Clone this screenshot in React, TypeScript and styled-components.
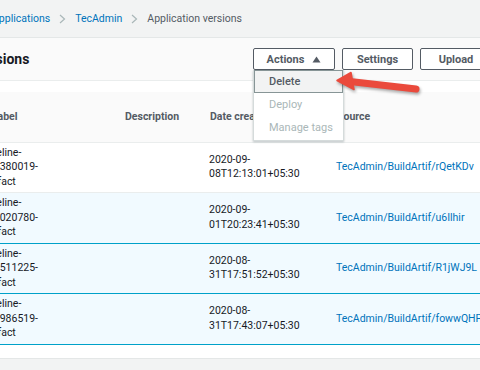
import React from "react";
import styled, { createGlobalStyle } from "styled-components";

const GlobalStyle = createGlobalStyle`
  html, body {
    margin: 0;
    padding: 0;
    background: #f2f3f3;
  }
  body {
    font-family: Roboto, "Liberation Sans", Arial, sans-serif;
    color: #16191f;
    overflow: hidden;
  }
`;

const Viewport = styled.div`
  position: relative;
  width: 480px;
  height: 370px;
  overflow: hidden;
  background: #f2f3f3;
`;

const Breadcrumbs = styled.nav`
  display: flex;
  align-items: center;
  gap: 9px;
  height: 37px;
  margin-left: -8px;
  border-bottom: 1px solid #e4e7e7;
  font-size: 10.5px;
`;

const Crumb = styled.span<{ $current?: boolean }>`
  color: ${p => (p.$current ? "#545b64" : "#0073bb")};
  white-space: nowrap;
`;

const Chevron = () => (
  <svg width="7" height="10" viewBox="0 0 7 10">
    <polyline points="1,1 5.5,5 1,9" fill="none" stroke="#aab7b8" strokeWidth="1.2" />
  </svg>
);

const Panel = styled.section`
  margin-left: -125px;
  width: 637px;
  background: #fff;
  border-bottom: 1px solid #e4e7e7;
  padding-bottom: 13px;
`;

const PanelHeader = styled.header`
  display: flex;
  align-items: center;
  justify-content: space-between;
  height: 42px;
  padding: 0 20px 0 26px;
  background: #fafafa;
  border-bottom: 1px solid #eaeded;
  margin-bottom: 11px;
`;

const Title = styled.h2`
  margin: 0;
  font-size: 14px;
  font-weight: 700;
  color: #16191f;
`;

const Toolbar = styled.div`
  display: flex;
  align-items: center;
  gap: 7px;
`;

const ButtonWrap = styled.div`
  position: relative;
`;

const Button = styled.button<{ $w: number }>`
  display: flex;
  align-items: center;
  justify-content: center;
  gap: 8px;
  width: ${p => p.$w}px;
  height: 22px;
  padding: 0;
  background: #fff;
  border: 1px solid #545b64;
  border-radius: 2px;
  font-family: inherit;
  font-size: 11px;
  font-weight: 700;
  color: #545b64;
`;

const Menu = styled.ul`
  position: absolute;
  top: 100%;
  left: 0;
  width: 89px;
  margin: 0;
  padding: 0 0 1px;
  list-style: none;
  background: #fff;
  border: 1px solid #d5dbdb;
  border-top: none;
  box-shadow: 0 1px 2px rgba(0, 28, 36, 0.25);
  z-index: 2;
`;

const MenuItem = styled.li<{ $active?: boolean; $disabled?: boolean }>`
  display: flex;
  align-items: center;
  height: 23px;
  box-sizing: border-box;
  padding-left: 14px;
  font-size: 11px;
  font-weight: ${p => (p.$active ? 500 : 400)};
  color: ${p => (p.$disabled ? "#aab7b8" : "#545b64")};
  background: ${p => (p.$active ? "#f2f3f3" : "transparent")};
  border: 1px solid ${p => (p.$active ? "#879596" : "transparent")};
`;

const Table = styled.table`
  border-collapse: collapse;
  table-layout: fixed;
  width: 100%;
  font-size: 10.5px;
`;

const HeadCell = styled.th<{ $w?: number; $pad?: number }>`
  position: relative;
  box-sizing: border-box;
  width: ${p => (p.$w ? `${p.$w}px` : "auto")};
  height: 50px;
  padding: 0 0 0 ${p => p.$pad ?? 15}px;
  background: #fafafa;
  border-bottom: 1px solid #eaeded;
  text-align: left;
  font-weight: 700;
  color: #545b64;
  white-space: nowrap;
  overflow: hidden;

  & + &::before {
    content: "";
    position: absolute;
    left: 0;
    top: 13px;
    height: 24px;
    border-left: 1px solid #eaeded;
  }
`;

const Row = styled.tr<{ $selected?: boolean }>`
  background: ${p => (p.$selected ? "#f1faff" : "#fff")};
  border-top: 1px solid ${p => (p.$selected ? "#00a1c9" : "#eaeded")};
  border-bottom: 1px solid ${p => (p.$selected ? "#00a1c9" : "#eaeded")};
`;

const Cell = styled.td<{ $pad?: number }>`
  box-sizing: border-box;
  height: 50.5px;
  padding: 0 0 0 ${p => p.$pad ?? 14}px;
  vertical-align: middle;
  line-height: 14.5px;
  color: #16191f;
  white-space: nowrap;
`;

const Line = styled.span`
  display: block;
`;

const SourceLink = styled.a`
  color: #0073bb;
  text-decoration: none;
`;

const Checkbox = styled.span`
  display: inline-block;
  width: 12px;
  height: 12px;
  border: 1px solid #879596;
  border-radius: 2px;
  background: #fff;
`;

const Arrow = styled.svg`
  position: absolute;
  left: 334px;
  top: 68px;
  filter: drop-shadow(1px 2px 1.5px rgba(0, 0, 0, 0.35));
  z-index: 3;
`;

const Lines = ({ lines }: { lines: string[] }) => (
  <>
    {lines.map(l => (
      <Line key={l}>{l}</Line>
    ))}
  </>
);

const versions = [
  { label: ["pipeline-", "599380019-", "artifact"], date: ["2020-09-", "08T12:13:01+05:30"], source: "TecAdmin/BuildArtif/rQetKDv", selected: false },
  { label: ["pipeline-", "599020780-", "artifact"], date: ["2020-09-", "01T20:23:41+05:30"], source: "TecAdmin/BuildArtif/u6Ilhir", selected: true },
  { label: ["pipeline-", "598511225-", "artifact"], date: ["2020-08-", "31T17:51:52+05:30"], source: "TecAdmin/BuildArtif/R1jWJ9L", selected: true },
  { label: ["pipeline-", "598986519-", "artifact"], date: ["2020-08-", "31T17:43:07+05:30"], source: "TecAdmin/BuildArtif/fowwQHPx", selected: true },
];

export default function App() {
  return (
    <Viewport>
      <GlobalStyle />
      <Breadcrumbs>
        <Crumb>Applications</Crumb>
        <Chevron />
        <Crumb>TecAdmin</Crumb>
        <Chevron />
        <Crumb $current>Application versions</Crumb>
      </Breadcrumbs>

      <Panel>
        <PanelHeader>
          <Title>Application versions</Title>
          <Toolbar>
            <ButtonWrap>
              <Button $w={82}>
                Actions
                <svg width="9" height="7" viewBox="0 0 9 7">
                  <polygon points="4.5,0.5 8.5,6.5 0.5,6.5" fill="#545b64" />
                </svg>
              </Button>
              <Menu>
                <MenuItem $active>Delete</MenuItem>
                <MenuItem $disabled>Deploy</MenuItem>
                <MenuItem $disabled>Manage tags</MenuItem>
              </Menu>
            </ButtonWrap>
            <Button $w={71}>Settings</Button>
            <Button $w={72}>Upload</Button>
          </Toolbar>
        </PanelHeader>

        <Table>
          <thead>
            <tr>
              <HeadCell $w={65} $pad={20}>
                <Checkbox />
              </HeadCell>
              <HeadCell $w={170} $pad={16}>Version label</HeadCell>
              <HeadCell $w={85}>Description</HeadCell>
              <HeadCell $w={127}>Date created</HeadCell>
              <HeadCell>Source</HeadCell>
            </tr>
          </thead>
          <tbody>
            {versions.map(v => (
              <Row key={v.source} $selected={v.selected}>
                <Cell $pad={20}>
                  <Checkbox />
                </Cell>
                <Cell $pad={42}>
                  <Lines lines={v.label} />
                </Cell>
                <Cell />
                <Cell>
                  <Lines lines={v.date} />
                </Cell>
                <Cell>
                  <SourceLink>{v.source}</SourceLink>
                </Cell>
              </Row>
            ))}
          </tbody>
        </Table>
      </Panel>

      <Arrow width="90" height="30" viewBox="0 0 90 30">
        <line x1="16" y1="13.5" x2="82" y2="21" stroke="#ea4a3c" strokeWidth="7" strokeLinecap="round" />
        <polygon points="3,12.5 17,4.5 20,21.5" fill="#ea4a3c" stroke="#ea4a3c" strokeWidth="1.5" strokeLinejoin="round" />
      </Arrow>
    </Viewport>
  );
}
